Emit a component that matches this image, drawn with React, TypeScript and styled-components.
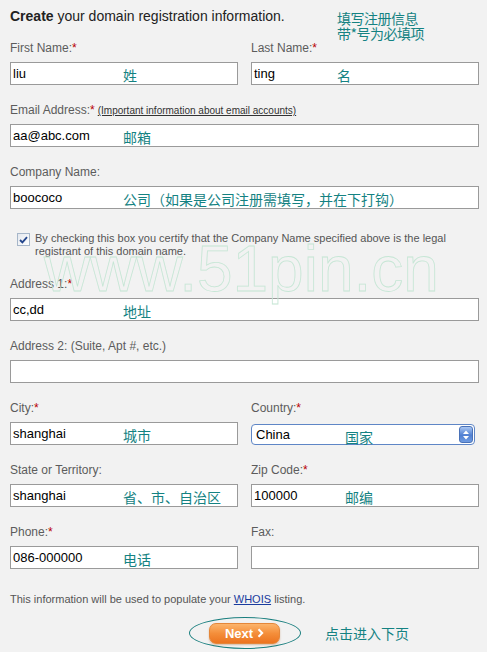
import React, { FC } from 'react'
import styled, { createGlobalStyle } from 'styled-components'

const GlobalStyle = createGlobalStyle`
  html, body {
    margin: 0;
    padding: 0;
    background: #f2f2f2;
  }
  body {
    font-family: "Liberation Sans", Arial, "Noto Sans CJK SC", sans-serif;
  }
`

const Page = styled.div`
  position: relative;
  width: 487px;
  height: 652px;
  box-sizing: border-box;
  padding: 7px 8px 0 10px;
  background: #f2f2f2;
  overflow: hidden;
`

const Header = styled.div`
  display: grid;
  grid-template-columns: 327px 1fr;
  height: 33px;
`

const Title = styled.div`
  font-size: 14px;
  line-height: 18px;
  color: #222;
  strong {
    font-weight: bold;
  }
`

const Note = styled.div`
  padding-top: 4px;
  font-family: "Noto Sans CJK SC", sans-serif;
  font-size: 14px;
  line-height: 14.5px;
  color: #148282;
  letter-spacing: -0.5px;
`

const Row = styled.div`
  display: grid;
  grid-template-columns: 228px 228px;
  column-gap: 13px;
`

const Group = styled.div`
  display: flex;
  flex-direction: column;
  margin-bottom: 17px;
`

const Label = styled.div`
  font-size: 12px;
  line-height: 16px;
  height: 16px;
  margin-bottom: 6px;
  color: #5c5c5c;
  white-space: nowrap;
`

const Star = styled.span`
  color: #b80000;
`

const SmallLink = styled.a`
  font-size: 10px;
  color: #333;
  text-decoration: underline;
  margin-left: 3px;
`

const InputBox = styled.div`
  position: relative;
  height: 23px;
  box-sizing: border-box;
  border: 1px solid #9a9a9a;
  background: #fff;
  display: flex;
  align-items: center;
  padding-left: 2px;
  font-size: 13px;
  color: #000;
`

const Hint = styled.span<{ $left: number }>`
  position: absolute;
  left: ${p => p.$left}px;
  top: 3px;
  font-family: "Noto Sans CJK SC", sans-serif;
  font-size: 14px;
  line-height: 18px;
  color: #148282;
  white-space: nowrap;
`

const SelectBox = styled.div`
  position: relative;
  margin-top: 2px;
  width: 224px;
  height: 21px;
  box-sizing: border-box;
  border: 1px solid #5f86c6;
  border-radius: 4px;
  background: #fff;
  display: flex;
  align-items: center;
  padding-left: 4px;
  font-size: 13px;
  color: #000;
`

const SelectValue = styled.span`
  flex: 1;
`

const ArrowBox = styled.div`
  width: 14px;
  height: 17px;
  margin-right: 1px;
  border-radius: 3px;
  background: linear-gradient(#a9c6f2, #4f7fd2 55%, #6f9be0);
  border: 1px solid #4a72b8;
  box-sizing: border-box;
  display: flex;
  align-items: center;
  justify-content: center;
`

/* margins collapse with the group above, so this is the full gap */
const Certify = styled.div`
  display: flex;
  align-items: flex-start;
  gap: 5px;
  padding-left: 7px;
  margin-top: 23px;
  margin-bottom: 18px;
`

const CheckBox = styled.div`
  flex: none;
  width: 13px;
  height: 13px;
  margin-top: 1px;
  box-sizing: border-box;
  border: 1px solid #a6b6c9;
  background: linear-gradient(135deg, #e4e8ee, #ffffff);
  display: flex;
  align-items: center;
  justify-content: center;
`

const CertifyText = styled.div`
  font-size: 11px;
  line-height: 13px;
  color: #555;
  width: 420px;
`

const Info = styled.div`
  margin-top: 7px;
  font-size: 11px;
  line-height: 13px;
  color: #555;
  a {
    color: #1a3c9e;
    text-decoration: underline;
  }
`

const Footer = styled.div`
  display: flex;
  align-items: center;
  margin-top: 11px;
  padding-left: 179px;
`

const Ellipse = styled.div`
  width: 112px;
  height: 32px;
  box-sizing: border-box;
  border: 1px solid #1a7f7f;
  border-radius: 50%;
  display: flex;
  align-items: center;
  justify-content: center;
`

const NextButton = styled.button`
  width: 71px;
  height: 21px;
  margin-left: -1px;
  border: 1px solid #e4873a;
  border-radius: 7px;
  background: linear-gradient(#fcb46c, #f48e3a 50%, #ec7420);
  box-shadow: 0 1px 2px rgba(160, 80, 20, 0.35);
  color: #fff;
  font-family: "Liberation Sans", Arial, sans-serif;
  font-size: 13px;
  font-weight: bold;
  display: flex;
  align-items: center;
  justify-content: center;
  gap: 4px;
  padding: 0;
`

const Cta = styled.span`
  margin-left: 24px;
  font-family: "Noto Sans CJK SC", sans-serif;
  font-size: 14px;
  color: #148282;
`

const Watermark = styled.div`
  position: absolute;
  left: 44px;
  top: 237px;
  font-family: "Liberation Sans", Arial, sans-serif;
  font-size: 64px;
  line-height: 64px;
  color: transparent;
  -webkit-text-stroke: 0.8px #c6e6d5;
  pointer-events: none;
  white-space: nowrap;
`

type FieldProps = {
  label: React.ReactNode
  required?: boolean
  value?: string
  hint?: string
  hintLeft?: number
}

const Field: FC<FieldProps> = ({ label, required, value, hint, hintLeft = 112 }) => (
  <Group>
    <Label>
      {label}
      {required && <Star>*</Star>}
    </Label>
    <InputBox>
      {value}
      {hint && <Hint $left={hintLeft}>{hint}</Hint>}
    </InputBox>
  </Group>
)

const App: FC = () => (
  <Page>
    <GlobalStyle />
    <Header>
      <Title>
        <strong>Create</strong> your domain registration information.
      </Title>
      <Note>
        填写注册信息
        <br />
        带*号为必填项
      </Note>
    </Header>

    <Row>
      <Field label='First Name:' required value='liu' hint='姓' />
      <Field label='Last Name:' required value='ting' hint='名' hintLeft={85} />
    </Row>

    <Field
      label={
        <>
          Email Address:<Star>*</Star>
          <SmallLink>(Important information about email accounts)</SmallLink>
        </>
      }
      value='aa@abc.com'
      hint='邮箱'
    />

    <Field label='Company Name:' value='boococo' hint='公司（如果是公司注册需填写，并在下打钩）' />

    <Certify>
      <CheckBox>
        <svg width='9' height='8' viewBox='0 0 9 8'>
          <path d='M1 4 L3.4 6.4 L8 1.2' fill='none' stroke='#24468c' strokeWidth='1.8' />
        </svg>
      </CheckBox>
      <CertifyText>
        By checking this box you certify that the Company Name specified above is the legal registrant of this
        domain name.
      </CertifyText>
    </Certify>

    <Field label='Address 1:' required value='cc,dd' hint='地址' />
    <Field label='Address 2: (Suite, Apt #, etc.)' />

    <Row>
      <Field label='City:' required value='shanghai' hint='城市' />
      <Group>
        <Label>
          Country:<Star>*</Star>
        </Label>
        <SelectBox>
          <SelectValue>China</SelectValue>
          <Hint $left={93}>国家</Hint>
          <ArrowBox>
            <svg width='8' height='12' viewBox='0 0 8 12'>
              <path d='M1 5 L4 1.5 L7 5 Z M1 7 L4 10.5 L7 7 Z' fill='#fff' />
            </svg>
          </ArrowBox>
        </SelectBox>
      </Group>
    </Row>

    <Row>
      <Field label='State or Territory:' value='shanghai' hint='省、市、自治区' />
      <Field label='Zip Code:' required value='100000' hint='邮编' hintLeft={93} />
    </Row>

    <Row>
      <Field label='Phone:' required value='086-000000' hint='电话' />
      <Field label='Fax:' />
    </Row>

    <Info>
      This information will be used to populate your <a>WHOIS</a> listing.
    </Info>

    <Footer>
      <Ellipse>
        <NextButton>
          Next
          <svg width='7' height='10' viewBox='0 0 7 10'>
            <path d='M1.5 1.2 L5.2 5 L1.5 8.8' fill='none' stroke='#fff' strokeWidth='2' />
          </svg>
        </NextButton>
      </Ellipse>
      <Cta>点击进入下页</Cta>
    </Footer>

    <Watermark>www.51pin.cn</Watermark>
  </Page>
)

export default App
